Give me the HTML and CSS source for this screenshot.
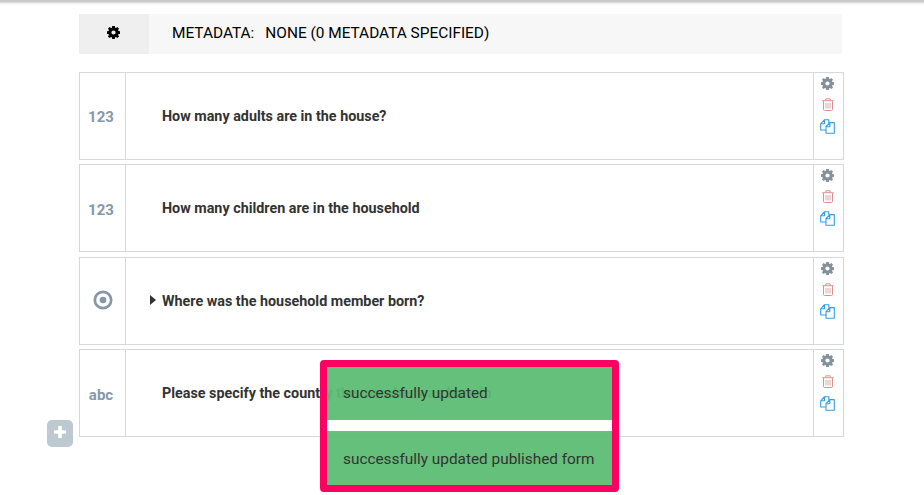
FILE: index.html
```
<!DOCTYPE html>
<html lang="en">
<head>
<meta charset="utf-8">
<title>Form builder</title>
<link rel="stylesheet" href="styles.css">
</head>
<body>
<svg class="symbols" aria-hidden="true">
  <symbol id="gear" viewBox="0 0 24 24"><path fill="currentColor" fill-rule="evenodd" d="M9.6 0h4.8l.7 3.2 1.5.6L19.3 2l2.9 2.9-1.8 2.7.6 1.6 3 .5v4.700l-3 .6-.6 1.500 1.800 2.700-2.900 2.900-2.700-1.800-1.500.600-.700 3.200H9.600L8.900 20.900l-1.500-.600L4.700 22.100l-2.900-2.900 1.800-2.700L3 15l-3-.600V9.700l3-.500.600-1.600L1.800 4.900 4.700 2l2.700 1.800 1.500-.600zM12 8.100a3.900 3.900 0 1 0 0 7.800 3.900 3.900 0 0 0 0-7.800z"/></symbol>
  <symbol id="trash" viewBox="0 0 12 13"><g fill="none" stroke="currentColor"><path d="M.3 2.700h11.400M3.800 2.500V.800h4.400v1.700M1.500 3v8.300q0 1.200 1 1.200h7q1 0 1-1.200V3"/><path stroke-width=".8" d="M4 5v5.500M6 5v5.500M8 5v5.500"/></g></symbol>
  <symbol id="copy" viewBox="0 0 15 15"><g fill="none" stroke="currentColor" stroke-width="1.100" stroke-linejoin="round"><path d="M6 11H.700V4.800L4.500.700h4.300v3.500M4.500.700v4.100H.700"/><path d="M6 7.700L9.800 3.600h4.500v10.600H6zM9.800 3.600v4.100H6"/></g></symbol>
</svg>
<main class="builder">
  <header class="metadata">
    <div class="metadata-toggle"><svg class="icon-gear"><use href="#gear"/></svg></div>
    <div class="metadata-text"><span class="metadata-label">METADATA:</span><span>NONE (0 METADATA SPECIFIED)</span></div>
  </header>
  <section class="rows">
    <article class="row">
      <div class="type type-first">123</div>
      <div class="question">How many adults are in the house?</div>
      <div class="actions"><svg class="icon-gear"><use href="#gear"/></svg><svg class="icon-trash"><use href="#trash"/></svg><svg class="icon-copy"><use href="#copy"/></svg></div>
    </article>
    <article class="row">
      <div class="type">123</div>
      <div class="question">How many children are in the household</div>
      <div class="actions"><svg class="icon-gear"><use href="#gear"/></svg><svg class="icon-trash"><use href="#trash"/></svg><svg class="icon-copy"><use href="#copy"/></svg></div>
    </article>
    <article class="row row-group">
      <div class="type"><svg class="icon-radio" viewBox="0 0 20 20"><circle cx="10" cy="10" r="8.200" fill="none" stroke="currentColor" stroke-width="2.700"/><circle cx="10" cy="10" r="3.300" fill="currentColor"/></svg></div>
      <div class="question"><span class="caret"></span>Where was the household member born?</div>
      <div class="actions"><svg class="icon-gear"><use href="#gear"/></svg><svg class="icon-trash"><use href="#trash"/></svg><svg class="icon-copy"><use href="#copy"/></svg></div>
    </article>
    <article class="row">
      <div class="type">abc</div>
      <div class="question">Please specify the country the member was born in</div>
      <div class="actions"><svg class="icon-gear"><use href="#gear"/></svg><svg class="icon-trash"><use href="#trash"/></svg><svg class="icon-copy"><use href="#copy"/></svg></div>
    </article>
  </section>
</main>
<div class="add"><svg class="icon-plus" viewBox="0 0 12 12"><path d="M6 0v12M0 6h12" stroke="#fff" stroke-width="3.600"/></svg></div>
<div class="toasts">
  <div class="toast">successfully updated</div>
  <div class="toast">successfully updated published form</div>
</div>
</body>
</html>
```

FILE: styles.css
```
* { box-sizing: border-box; }
body {
  margin: 0;
  height: 495px;
  overflow: hidden;
  position: relative;
  background: linear-gradient(#c9c9c9 0, #cdcdcd 2px, #ebebeb 3px, #fff 5px) #fff;
  font-family: Roboto, sans-serif;
  color: #333;
}
.symbols { position: absolute; width: 0; height: 0; }
svg { display: block; }
.builder { padding: 14px 0 0 79px; }
.metadata {
  display: flex;
  width: 763px;
  height: 40px;
  background: #f7f7f7;
  color: #000;
  font-size: 15.4px;
}
.metadata-toggle {
  width: 70px;
  display: flex;
  align-items: center;
  justify-content: center;
  background: #efefef;
}
.metadata-toggle .icon-gear { margin: -3px 0 0 -1px; }
.metadata-text { padding-left: 23px; line-height: 38px; }
.metadata-label { margin-right: 11px; }
.rows { margin-top: 18px; }
.row {
  display: flex;
  width: 765px;
  height: 88px;
  margin-bottom: 4px;
  border: 1px solid #d5d9dd;
}
.row-group { margin-top: 5px; }
.type {
  width: 46px;
  border-right: 1px solid #d5d9dd;
  display: flex;
  align-items: center;
  justify-content: center;
  padding: 3px 3px 0 0;
  color: #8797a8;
  font-size: 15px;
  font-weight: 700;
}
.type-first { padding-top: 1px; }
.question {
  position: relative;
  flex: 1;
  padding-left: 36px;
  line-height: 86px;
  font-size: 14.33px;
  font-weight: 700;
}
.caret {
  position: absolute;
  left: 24px;
  top: 37px;
  border-left: 6px solid #333;
  border-top: 5px solid transparent;
  border-bottom: 5px solid transparent;
}
.actions {
  width: 30px;
  border-left: 1px solid #d5d9dd;
  display: flex;
  flex-direction: column;
  align-items: center;
  padding: 4px 1px 0 0;
}
.icon-gear { width: 13px; height: 13px; }
.actions .icon-gear { color: #84919c; margin-left: -1px; }
.icon-trash { width: 12px; height: 13px; margin-top: 8px; color: #dc9292; }
.icon-copy { width: 15px; height: 15px; margin: 8px 0 0 -1px; color: #369ee5; }
.icon-radio { width: 20px; height: 20px; margin: -5px -3px 0 0; }
.add {
  position: absolute;
  left: 47px;
  top: 420px;
  width: 26px;
  height: 27px;
  border-radius: 5px;
  background: #bdc9d0;
  display: flex;
  justify-content: center;
  padding-top: 6px;
}
.icon-plus { width: 12px; height: 12px; }
.toasts {
  position: absolute;
  left: 320px;
  top: 360px;
  width: 298.5px;
  height: 132px;
  border: 7px solid #ff0062;
  border-radius: 4px;
  display: flex;
  flex-direction: column;
  gap: 11px;
}
.toast {
  height: 53px;
  padding-left: 16px;
  line-height: 52px;
  font-size: 15.37px;
  background: rgba(92, 189, 115, .95);
}
.toast:last-child { height: 54px; line-height: 56px; }
```
